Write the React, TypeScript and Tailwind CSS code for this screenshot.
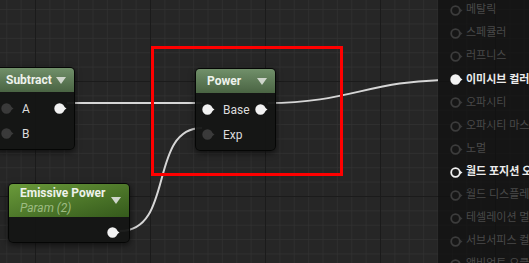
import React from 'react';

type PinKind = 'on' | 'off' | 'ring' | 'ringOn';

const Pin: React.FC<{ kind: PinKind }> = ({ kind }) => {
  const fill =
    kind === 'on' ? '#f2f2f2' : kind === 'off' ? '#3a3a3a' : kind === 'ringOn' ? '#1a1a1a' : '#161616';
  const stroke =
    kind === 'on' ? '#f2f2f2' : kind === 'off' ? '#3a3a3a' : kind === 'ringOn' ? '#f0f0f0' : '#3c3c3c';
  const arrow = kind === 'on' || kind === 'ringOn' ? '#f0f0f0' : '#3a3a3a';
  return (
    <svg width="13" height="11" viewBox="0 0 13 11" className="shrink-0">
      <polygon points="9,3 12.5,5.5 9,8" fill={arrow} />
      <circle cx="5.5" cy="5.5" r="4.3" fill={fill} stroke={stroke} strokeWidth="1.8" />
    </svg>
  );
};

const Arrow = () => (
  <svg width="10" height="7" viewBox="0 0 10 7" className="shrink-0">
    <polygon points="0,0 10,0 5,7" fill="#cfd6cc" />
  </svg>
);

const PowerNode: React.FC<{ title: string; rows: { label: string; pin: PinKind; out?: PinKind }[]; className: string }> = ({
  title,
  rows,
  className,
}) => (
  <div className={`absolute flex flex-col rounded-[5px] border border-black/70 bg-[#141514]/95 shadow-[0_2px_6px_rgba(0,0,0,0.6)] ${className}`}>
    <div className="flex h-[24px] items-center justify-between rounded-t-[4px] bg-linear-to-b from-[#71906a] to-[#4a6443] pl-[11px] pr-[8px]">
      <span className="text-[12px] font-bold text-[#eef2ec]">{title}</span>
      <Arrow />
    </div>
    <div className="flex flex-col pt-[4px] pb-[3px]">
      {rows.map((r) => (
        <div key={r.label} className="flex h-[25px] items-center pl-[6px] pr-[7px]">
          <Pin kind={r.pin} />
          <span className="ml-[8px] flex-1 text-[12px] text-[#dcdcdc]">{r.label}</span>
          {r.out && <Pin kind={r.out} />}
        </div>
      ))}
    </div>
  </div>
);

const outputs: { label: string; kind: PinKind; bright?: boolean }[] = [
  { label: '메탈릭', kind: 'ring' },
  { label: '스페큘러', kind: 'ring' },
  { label: '러프니스', kind: 'ring' },
  { label: '이미시브 컬러', kind: 'on', bright: true },
  { label: '오파시티', kind: 'ring' },
  { label: '오파시티 마스크', kind: 'ring' },
  { label: '노멀', kind: 'ring' },
  { label: '월드 포지션 오프셋', kind: 'ringOn', bright: true },
  { label: '월드 디스플레이스먼트', kind: 'ring' },
  { label: '테셀레이션 멀티플라이어', kind: 'ring' },
  { label: '서브서피스 컬러', kind: 'ring' },
  { label: '앰비언트 오클루전', kind: 'ring' },
];

export default function App() {
  return (
    <div className="relative h-[263px] w-[529px] overflow-hidden bg-[#262626] font-['Roboto','Noto_Sans_CJK_KR',sans-serif]">
      <svg className="absolute inset-0" width="529" height="263">
        <defs>
          <pattern id="minor" x="6.25" y="9.1" width="14.375" height="14.375" patternUnits="userSpaceOnUse">
            <path d="M0 0 H14.375 M0 0 V14.375" stroke="#323232" strokeWidth="1.2" fill="none" />
          </pattern>
          <pattern id="major" x="35" y="81" width="115" height="115" patternUnits="userSpaceOnUse">
            <path d="M0 0 H115 M0 0 V115" stroke="#1b1b1b" strokeWidth="2" fill="none" />
          </pattern>
        </defs>
        <rect width="529" height="263" fill="url(#minor)" />
        <rect width="529" height="263" fill="url(#major)" />
      </svg>

      <div className="absolute inset-0 flex">
        <div className="relative flex-1">
          <svg className="absolute inset-0" width="438" height="263">
            <g stroke="#d6d6d6" strokeWidth="2" fill="none">
              <path d="M67 103 L202 103" />
              <path d="M268 103 C350 103 370 80 450 80" />
              <path d="M120 231 C175 231 148 128 202 128" />
            </g>
          </svg>

          <PowerNode
            title="Subtract"
            className="left-[-6px] top-[67px] w-[81px]"
            rows={[
              { label: 'A', pin: 'off', out: 'on' },
              { label: 'B', pin: 'off' },
            ]}
          />

          <PowerNode
            title="Power"
            className="left-[195px] top-[68px] w-[81px]"
            rows={[
              { label: 'Base', pin: 'on', out: 'on' },
              { label: 'Exp', pin: 'off' },
            ]}
          />

          <div className="absolute left-[8px] top-[183px] flex w-[122px] flex-col rounded-[5px] border border-black/70 bg-[#141514]/95 shadow-[0_2px_6px_rgba(0,0,0,0.6)]">
            <div className="flex h-[33px] items-center justify-between rounded-t-[4px] bg-linear-to-br from-[#6a9a3a] to-[#355a1c] pl-[11px] pr-[8px]">
              <div className="flex flex-col leading-[15px]">
                <span className="text-[12px] font-bold text-[#eef2ec]">Emissive Power</span>
                <span className="text-[12px] italic text-[#9dbb82]">Param (2)</span>
              </div>
              <Arrow />
            </div>
            <div className="flex h-[25px] items-center justify-end pr-[9px] pt-[6px]">
              <Pin kind="on" />
            </div>
          </div>

          <div className="absolute left-[151px] top-[46px] h-[130px] w-[192px] border-[3px] border-[#ff0000]" />
        </div>

        <div className="flex w-[91px] shrink-0 flex-col bg-[#0e0e0e]/70 pl-[12px] pt-0 -mt-px">
          {outputs.map((o) => (
            <div key={o.label} className="flex h-[23.1px] shrink-0 items-center gap-[3px] whitespace-nowrap">
              <Pin kind={o.kind} />
              <span className={`text-[11px] ${o.bright ? 'font-bold text-[#ececec]' : 'text-[#494949]'}`}>{o.label}</span>
            </div>
          ))}
        </div>
      </div>
    </div>
  );
}
